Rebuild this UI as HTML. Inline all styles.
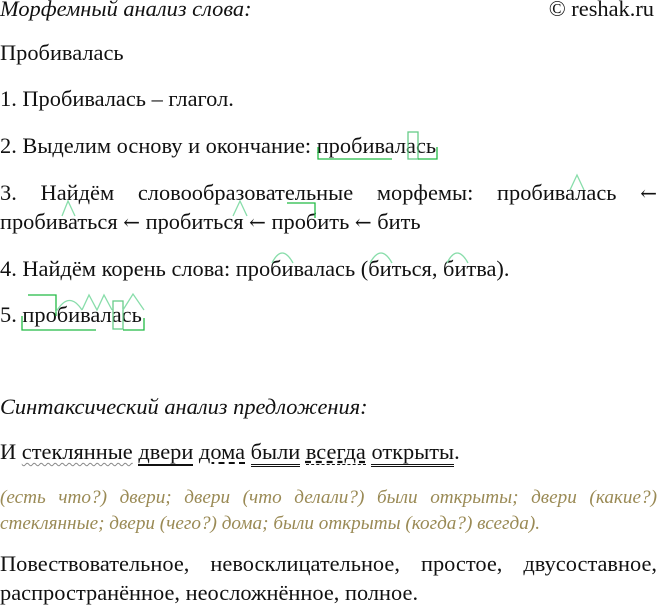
<!DOCTYPE html>
<html><head><meta charset="utf-8"><style>
body{margin:0;width:657px;height:606px;background:#fff;position:relative;overflow:hidden;font-family:"Liberation Serif",serif;font-size:22.4px;color:#111}
.l{position:absolute;left:0;white-space:nowrap;line-height:26px}
.j{width:657px;text-align:justify;text-align-last:justify;white-space:normal}
i{font-style:italic}
.g{color:#9a8a55;font-style:italic;font-size:19.2px}
.a{font-family:"DejaVu Serif",serif;font-size:20px}
svg{position:absolute;left:0;top:0}
</style></head><body>
<div class="l" style="top:-4px"><i>Морфемный анализ слова:</i></div>
<div class="l" style="top:-4px;left:auto;right:3px">© reshak.ru</div>
<div class="l" style="top:40px">Пробивалась</div>
<div class="l" style="top:86px">1. Пробивалась – глагол.</div>
<div class="l" style="top:133px">2. Выделим основу и окончание: пробивалась</div>
<div class="l j" style="top:180px">3. Найдём словообразовательные морфемы: пробивалась <span class="a">←</span></div>
<div class="l" style="top:209px">пробиваться <span class="a">←</span> пробиться <span class="a">←</span> пробить <span class="a">←</span> бить</div>
<div class="l" style="top:256px">4. Найдём корень слова: пробивалась (биться, битва).</div>
<div class="l" style="top:302px">5. пробивалась</div>
<div class="l" style="top:394px"><i>Синтаксический анализ предложения:</i></div>
<div class="l" style="top:439px">И <span style="text-decoration:underline wavy #888 1px;text-underline-offset:3px">стеклянные</span> <span style="border-bottom:2px solid #111">двери</span> <span style="text-decoration:underline dashed #111 2px;text-underline-offset:3px">дома</span> <span style="border-bottom:3px double #111">были</span> <span style="text-decoration:underline dashed #111;text-underline-offset:2px;border-bottom:1px dashed #111">всегда</span> <span style="border-bottom:3px double #111">открыты</span>.</div>
<div class="l j g" style="top:485px">(есть что?) двери; двери (что делали?) были открыты; двери (какие?)</div>
<div class="l g" style="top:511px">стеклянные; двери (чего?) дома; были открыты (когда?) всегда).</div>
<div class="l j" style="top:551px">Повествовательное, невосклицательное, простое, двусоставное,</div>
<div class="l" style="top:580px">распространённое, неосложнённое, полное.</div>
<svg width="657" height="606" fill="none" stroke="#22bb44" stroke-width="1.3">
<path d="M318 147V159H392"/><rect x="408" y="132" width="10" height="27" stroke="#66cc88"/><path d="M418 159H437V147"/>
<path d="M570 190L577 175L584 190" stroke="#88ddaa"/>
<path d="M62 216L68 201L75 216" stroke="#88ddaa"/><path d="M233 216L240 201L247 216" stroke="#88ddaa"/>
<path d="M287 203H315V218"/>
<path d="M272 263Q282 243 293 263" stroke="#88ddaa"/><path d="M370 263Q381 243 392 263" stroke="#88ddaa"/><path d="M447 263Q457 243 468 263" stroke="#88ddaa"/>
<path d="M28 295H56V316"/><path d="M56 312Q69 290 82 310" stroke="#88ddaa"/><path d="M82 310L89 295L97 310L104 295L112 310" stroke="#88ddaa"/>
<rect x="113" y="301" width="10" height="28" stroke="#66cc88"/><path d="M123 310L133 294L144 310" stroke="#88ddaa"/>
<path d="M22 316V330H96"/><path d="M123 330H144V318"/>
</svg>
</body></html>
